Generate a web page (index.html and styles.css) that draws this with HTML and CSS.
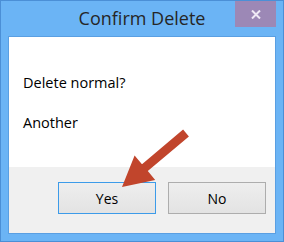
FILE: index.html
```html
<!DOCTYPE html>
<html lang="en">
	<head>
		<meta charset="UTF-8" />
		<meta name="viewport" content="width=device-width, initial-scale=1.0" />
		<title>Confirm Delete</title>
		<link rel="stylesheet" href="styles.css">
	</head>
	<body>
		<div class="window">
			<div class="titlebar">
				<span class="title">Confirm Delete</span>
				<button class="close-btn" aria-label="Close">
					<svg width="10" height="9" viewBox="0 0 10 9">
						<path d="M1 0.5 L9 8.5 M9 0.5 L1 8.5" stroke="#efe9f5" stroke-width="2" fill="none" />
					</svg>
				</button>
			</div>

			<div class="client">
				<div class="message">
					<p>Delete normal?</p>
					<p>Another</p>
				</div>

				<div class="footer">
					<button class="btn btn-focus">Yes</button>
					<button class="btn">No</button>
				</div>
			</div>

			<!-- annotation arrow drawn over the dialog -->
			<svg class="arrow" width="284" height="242" viewBox="0 0 284 242">
				<polygon
					points="188.9,136.4 183.1,129.6 142.0,164.2 134.6,155.4 122,187 155.2,179.9 147.8,171.1"
					fill="#c1452c"
				/>
			</svg>
		</div>
	</body>
</html>
```

FILE: styles.css
```css
:root {
	--frame-color: #6bb4f5;
	--frame-edge: #4b8fd6;
	--frame-inner: #5a9fe2;
	--close-bg: #9c88b6;
	--footer-bg: #f0f0f0;
	--btn-border: #adadad;
	--btn-focus: #3c9be9;
}

* {
	box-sizing: border-box;
	margin: 0;
	padding: 0;
}

body {
	font-family: 'Open Sans', 'Noto Sans', sans-serif;
	width: 284px;
	height: 242px;
	overflow: hidden;
}

.window {
	position: relative;
	width: 284px;
	height: 242px;
	background-color: var(--frame-color);
	border: 1px solid var(--frame-edge);
	padding: 0 7px 7px;
	display: flex;
	flex-direction: column;
}

.titlebar {
	height: 35px;
	display: grid;
	grid-template-columns: 41px 1fr 41px;
}

.title {
	grid-column: 2;
	text-align: center;
	font-size: 18px;
	line-height: 35px;
	color: #262626;
}

.close-btn {
	grid-column: 3;
	height: 26px;
	border: none;
	background-color: var(--close-bg);
	display: flex;
	align-items: center;
	justify-content: center;
}

.client {
	flex: 1;
	border: 1px solid var(--frame-inner);
	display: flex;
	flex-direction: column;
}

.message {
	height: 130px;
	background-color: #fff;
	padding: 36px 0 0 14px;
	display: flex;
	flex-direction: column;
	gap: 20px;
}

.message p {
	font-size: 14.5px;
	line-height: 20px;
	color: #000;
}

.footer {
	flex: 1;
	background-color: var(--footer-bg);
	padding: 15px 9px 0;
	display: flex;
	justify-content: flex-end;
	align-items: flex-start;
	gap: 12px;
}

.btn {
	width: 98px;
	height: 32px;
	border: 1px solid var(--btn-border);
	background: linear-gradient(to bottom, #eeeeee, #e3e3e3);
	font-family: inherit;
	font-size: 14px;
	color: #000;
}

.btn-focus {
	border-color: var(--btn-focus);
}

.arrow {
	position: absolute;
	top: -1px;
	left: -1px;
	pointer-events: none;
}
```
